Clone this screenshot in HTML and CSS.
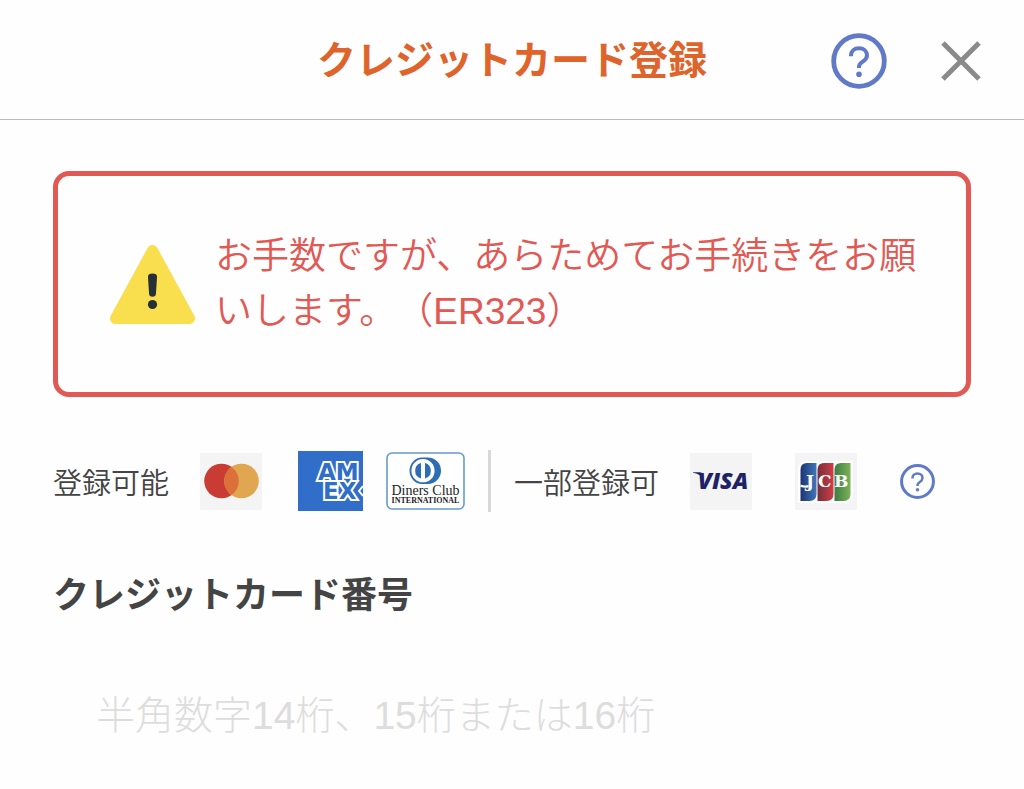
FILE: index.html
```
<!DOCTYPE html>
<html lang="ja">

<head>
    <meta charset="UTF-8">
    <meta name="viewport" content="width=device-width, initial-scale=1.0">
    <title>クレジットカード登録</title>
    <link rel="stylesheet" href="styles.css">
</head>

<body>
    <header class="header">
        <h1>クレジットカード登録</h1>
        <div class="header-actions">
            <button type="button" class="icon-button" aria-label="ヘルプ">
                <svg class="help-icon" viewBox="0 0 56 56">
                    <circle cx="28" cy="28" r="25.3" stroke-width="4.8" />
                    <path d="M20 23.2v-.7c0-4.300 3.400-7.200 8-7.200s8 2.900 8 7.200c0 6.200-8 6-8 11.200v1.300" stroke-width="4" />
                    <circle class="dot" cx="28" cy="41.200" r="2.800" />
                </svg>
            </button>
            <button type="button" class="icon-button" aria-label="閉じる">
                <svg class="close-icon" viewBox="0 0 38 38">
                    <path d="M1 1l36 36M37 1l-36 36" />
                </svg>
            </button>
        </div>
    </header>

    <main>
        <div class="alert" role="alert">
            <svg class="alert-icon" viewBox="0 0 85 79">
                <path d="M42.500 5.500L79.500 73.500H5.500z" fill="#f9de4e" stroke="#f9de4e" stroke-width="11" stroke-linejoin="round" />
                <path d="M38 31.500q0-3 4.500-3t4.500 3l-1 17q-.300 3.200-3.500 3.200t-3.500-3.200z" fill="#263035" />
                <circle cx="42.500" cy="59.500" r="4.600" fill="#263035" />
            </svg>
            <p>お手数ですが、あらためてお手続きをお願いします。（ER323）</p>
        </div>

        <div class="cards">
            <div class="card-group">
                <span>登録可能</span>
                <svg class="card" viewBox="0 0 62 57" role="img" aria-label="Mastercard">
                    <rect width="62" height="57" fill="#f4f4f4" />
                    <circle cx="21.500" cy="28" r="17.300" fill="#c83c34" />
                    <circle cx="41.500" cy="28" r="17.300" fill="#e0a650" />
                    <path d="M31.500 13.900a17.300 17.300 0 0 1 0 28.200a17.300 17.300 0 0 1 0-28.200z" fill="#dd703a" />
                </svg>
            </div>
            <svg class="card-amex" viewBox="0 0 65 60" role="img" aria-label="American Express">
                <rect width="65" height="60" fill="#306ec9" />
                <g class="amex-text">
                    <text x="20" y="29">AM</text>
                    <text x="25" y="48">EX</text>
                </g>
                <path d="M65 35l-4 5 4 5" fill="#306ec9" stroke="#fff" stroke-width="2" />
            </svg>
            <svg class="card-diners" viewBox="0 0 79 58" role="img" aria-label="Diners Club International">
                <rect x="1" y="1" width="77" height="56" rx="5" fill="#fff" stroke="#649bcf" stroke-width="1.600" />
                <path d="M36 5.500h5.500c8 0 13.500 6 13.500 13.200S49.500 32 41.500 32H36c-7 0-12.500-6-12.500-13.200S29 5.500 36 5.500z" fill="#2d6db5" />
                <circle cx="37" cy="18.700" r="11.600" fill="#fff" />
                <path d="M35 11a8 8 0 0 0 0 15.400zM39 11a8 8 0 0 1 0 15.400z" fill="#2d6db5" />
                <text class="diners-name" x="39.500" y="43" text-anchor="middle">Diners Club</text>
                <text class="diners-sub" x="39.500" y="51" text-anchor="middle">INTERNATIONAL</text>
            </svg>
            <div class="divider"></div>
            <div class="card-group">
                <span>一部登録可</span>
                <svg class="card" viewBox="0 0 62 57" role="img" aria-label="VISA">
                    <rect width="62" height="57" fill="#f4f4f4" />
                    <path d="M3 19.200h7q2 0 2.500 2l.500 4c-2-2.800-5.500-4.600-10-5.400z" fill="#202269" />
                    <text class="visa-text" x="33" y="36" text-anchor="middle">VISA</text>
                </svg>
            </div>
            <svg class="card card-jcb" viewBox="0 0 62 57" role="img" aria-label="JCB">
                <defs>
                    <linearGradient id="jcb-blue">
                        <stop offset="0" stop-color="#1f3473" />
                        <stop offset="1" stop-color="#3d78b9" />
                    </linearGradient>
                    <linearGradient id="jcb-red">
                        <stop offset="0" stop-color="#74303a" />
                        <stop offset="1" stop-color="#d03d48" />
                    </linearGradient>
                    <linearGradient id="jcb-green">
                        <stop offset="0" stop-color="#3d7d45" />
                        <stop offset="1" stop-color="#7bb356" />
                    </linearGradient>
                </defs>
                <rect width="62" height="57" fill="#f4f4f4" />
                <path d="M11 8h47v34q0 8-8 8H3V16q0-8 8-8z" fill="#fff" />
                <path d="M12 10h9.500v31q0 7-7 7H5.500V17q0-7 6.500-7z" fill="url(#jcb-blue)" />
                <path d="M29 10h9.500v31q0 7-7 7h-9V17q0-7 6.500-7z" fill="url(#jcb-red)" />
                <path d="M46 10h9.500v31q0 7-7 7h-9V17q0-7 6.500-7z" fill="url(#jcb-green)" />
                <path d="M5.500 31.500q4 1.500 8 .500v2.500q-4 .500-8-.500z" fill="#fff" />
                <text class="jcb-text" x="11" y="34">J</text>
                <text class="jcb-text" x="23" y="34">C</text>
                <text class="jcb-text" x="39" y="34">B</text>
            </svg>
            <button type="button" class="icon-button" aria-label="登録可能なカードについて">
                <svg class="help-icon help-small" viewBox="0 0 56 56">
                    <circle cx="28" cy="28" r="25.500" stroke-width="4.800" />
                    <path d="M20 23.200v-.700c0-4.300 3.400-7.200 8-7.200s8 2.900 8 7.200c0 6.200-8 6-8 11.200v1.300" stroke-width="4" />
                    <circle class="dot" cx="28" cy="41.200" r="2.800" />
                </svg>
            </button>
        </div>

        <label for="card-number">クレジットカード番号</label>
        <input type="text" id="card-number" inputmode="numeric" placeholder="半角数字14桁、15桁または16桁">
    </main>
</body>

</html>
```
FILE: styles.css
```
* {
    box-sizing: border-box;
}

body {
    margin: 0;
    font-family: "Liberation Sans", "Noto Sans CJK JP", sans-serif;
    font-weight: 350;
    text-spacing-trim: space-all;
    color: #444;
    background-color: #fefefe;
}

.header {
    display: grid;
    grid-template-columns: 1fr auto 1fr;
    align-items: center;
    height: 120px;
    padding: 2px 44px 0;
    border-bottom: 1px solid #bbb;
}

.header h1 {
    grid-column: 2;
    margin: 0;
    font-size: 39px;
    font-weight: 700;
    line-height: 60px;
    color: #df642b;
}

.header-actions {
    display: flex;
    justify-content: flex-end;
    align-items: center;
    gap: 55px;
}

.icon-button {
    display: block;
    padding: 0;
    border: none;
    background: none;
    cursor: pointer;
}

.icon-button svg {
    display: block;
}

.help-icon {
    width: 56px;
    height: 56px;
    fill: none;
    stroke: #607ac8;
    stroke-linecap: butt;
}

.help-icon .dot {
    fill: #607ac8;
    stroke: none;
}

.help-small {
    width: 35px;
    height: 35px;
}

.close-icon {
    width: 38px;
    height: 38px;
    overflow: visible;
    fill: none;
    stroke: #8a8a8a;
    stroke-width: 5;
}

main {
    padding: 51px 53px;
}

.alert {
    display: flex;
    align-items: center;
    gap: 20px;
    padding: 53px 40px 53px 52px;
    border: 5px solid #e25853;
    border-radius: 16px;
    color: #e25853;
}

.alert-icon {
    flex: none;
    width: 85px;
    height: 79px;
}

.alert p {
    margin: 0;
    font-size: 37px;
    line-height: 55px;
}

.cards {
    display: flex;
    align-items: center;
    height: 62px;
    margin: 53px 0 54px;
    gap: 23px;
    font-size: 29px;
    white-space: nowrap;
}

.cards svg {
    flex: none;
}

.card-group {
    display: flex;
    align-items: center;
    gap: 31px;
}

.card {
    width: 62px;
    height: 57px;
}

.card-amex {
    width: 65px;
    height: 60px;
    margin-left: 13px;
}

.amex-text {
    font: bold 23px "DejaVu Sans", sans-serif;
    fill: #306ec9;
    stroke: #fff;
    stroke-width: 4px;
    paint-order: stroke;
}

.card-diners {
    width: 79px;
    height: 58px;
}

.diners-name {
    font: 14px "Liberation Serif", serif;
    fill: #222;
}

.diners-sub {
    font: bold 8px "Liberation Serif", serif;
    fill: #222;
}

.divider {
    width: 3px;
    height: 62px;
    background-color: #d8d8d8;
}

.visa-text {
    font: italic 800 23px "Open Sans", sans-serif;
    fill: #202269;
}

.card-jcb {
    margin: 0 20px;
}

.jcb-text {
    font: bold 17px "DejaVu Serif", serif;
    fill: #fff;
}

label {
    display: block;
    font-size: 36px;
    font-weight: 700;
    line-height: 60px;
}

#card-number {
    display: block;
    width: 100%;
    height: 80px;
    margin-top: 50px;
    padding: 0 43px;
    border: none;
    outline: none;
    background: none;
    color: #444;
    font-family: inherit;
    font-size: 39px;
    font-weight: 300;
}

#card-number::placeholder {
    color: #ddd;
    opacity: 1;
}
```
